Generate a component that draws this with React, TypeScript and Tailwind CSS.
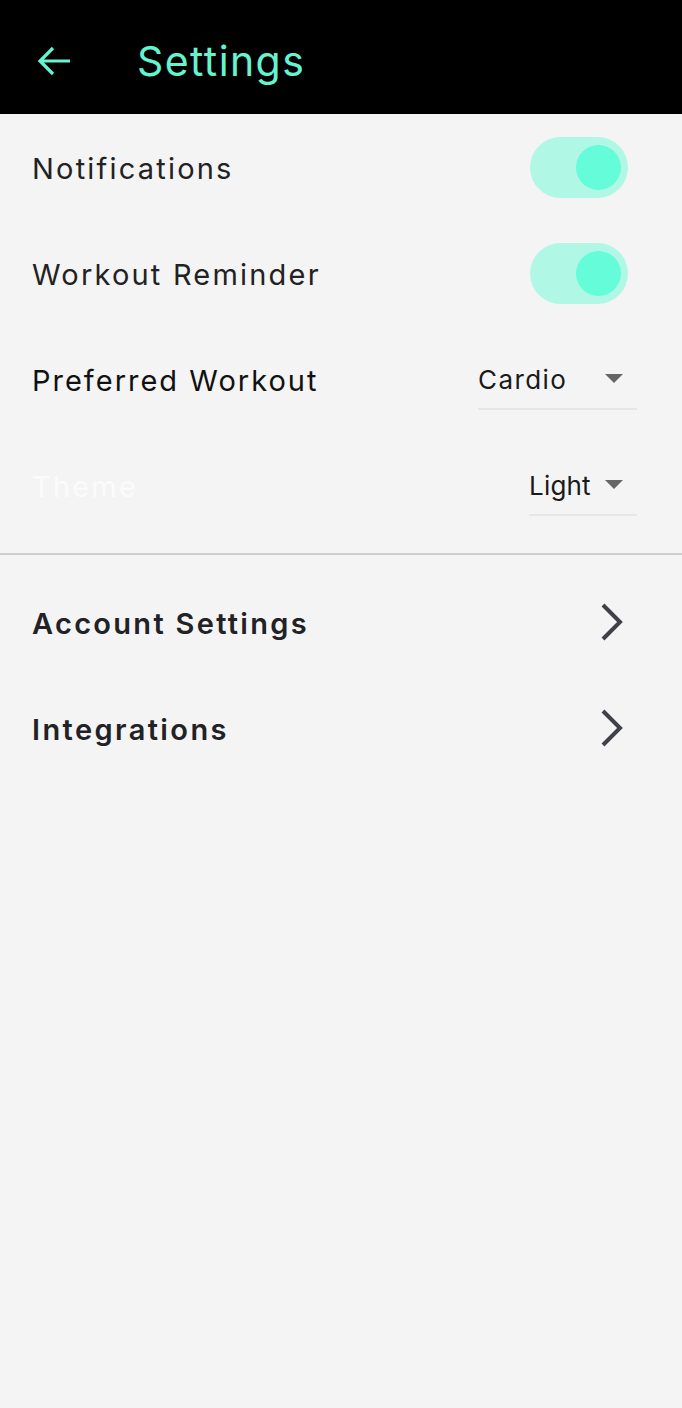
import React from "react";

const font = { fontFamily: "Inter, 'Open Sans', sans-serif" };

function Toggle() {
  return (
    <div className="relative h-[61px] w-[98px] rounded-full bg-[#b0f8e5]">
      <div className="absolute right-[7px] top-[8px] h-[45px] w-[45px] rounded-full bg-[#64fcd9]" />
    </div>
  );
}

function Dropdown({ value, width, tracking }: { value: string; width: string; tracking: string }) {
  return (
    <div className={`flex h-[62px] items-center justify-between border-b-2 border-[#e6e6e6] ${width}`}>
      <span className={`mt-[2px] text-[26px] text-[#1a1a1a] ${tracking}`}>{value}</span>
      <svg width="18" height="10" viewBox="0 0 18 10" className="mr-[14px] mt-[2px]">
        <path d="M0 0 L18 0 L9 9 Z" fill="#666666" />
      </svg>
    </div>
  );
}

function Chevron() {
  return (
    <svg width="26" height="40" viewBox="0 0 26 40" className="mr-[3px]">
      <path d="M4 3 L21 20 L4 37" stroke="#404048" strokeWidth="4" fill="none" strokeLinecap="butt" />
    </svg>
  );
}

export default function App() {
  return (
    <div className="min-h-[1408px] w-[682px] bg-[#f4f4f4]" style={font}>
      <div className="flex h-[114px] items-center bg-black">
        <svg width="34" height="30" viewBox="0 0 34 30" className="ml-[37px] mt-[8px]">
          <path d="M33 15 H3 M16 2 L3 15 L16 28" stroke="#64f4cf" strokeWidth="3.2" fill="none" />
        </svg>
        <span className="ml-[66px] mt-[10px] text-[41px] tracking-[1.4px] text-[#64f4cf]">Settings</span>
      </div>
      <div className="flex h-[106px] items-center justify-between pl-[32px] pr-[54px]">
        <span className="mt-[4px] text-[29px] tracking-[2.2px] text-[#222222]">Notifications</span>
        <Toggle />
      </div>
      <div className="flex h-[106px] items-center justify-between pl-[32px] pr-[54px]">
        <span className="mt-[4px] text-[29px] tracking-[2.2px] text-[#222222]">Workout Reminder</span>
        <Toggle />
      </div>
      <div className="flex h-[106px] items-center justify-between pl-[32px] pr-[45px]">
        <span className="mt-[4px] text-[29px] tracking-[2px] text-[#111111]">Preferred Workout</span>
        <Dropdown value="Cardio" width="w-[159px]" tracking="tracking-[1.4px]" />
      </div>
      <div className="flex h-[106px] items-center justify-between pl-[32px] pr-[45px]">
        <span className="mt-[4px] text-[29px] tracking-[2.2px] text-[#fbfbfb]">Theme</span>
        <Dropdown value="Light" width="w-[108px]" tracking="tracking-[0.2px]" />
      </div>
      <div className="mt-[15px] h-[2px] w-full bg-[#d0ccd1]" />
      <div className="mt-[14px] flex h-[106px] items-center justify-between pl-[32px] pr-[54px]">
        <span className="mt-[4px] text-[29px] font-semibold tracking-[2.3px] text-[#222226]">Account Settings</span>
        <Chevron />
      </div>
      <div className="flex h-[106px] items-center justify-between pl-[32px] pr-[54px]">
        <span className="mt-[4px] text-[29px] font-semibold tracking-[2.4px] text-[#222226]">Integrations</span>
        <Chevron />
      </div>
    </div>
  );
}
